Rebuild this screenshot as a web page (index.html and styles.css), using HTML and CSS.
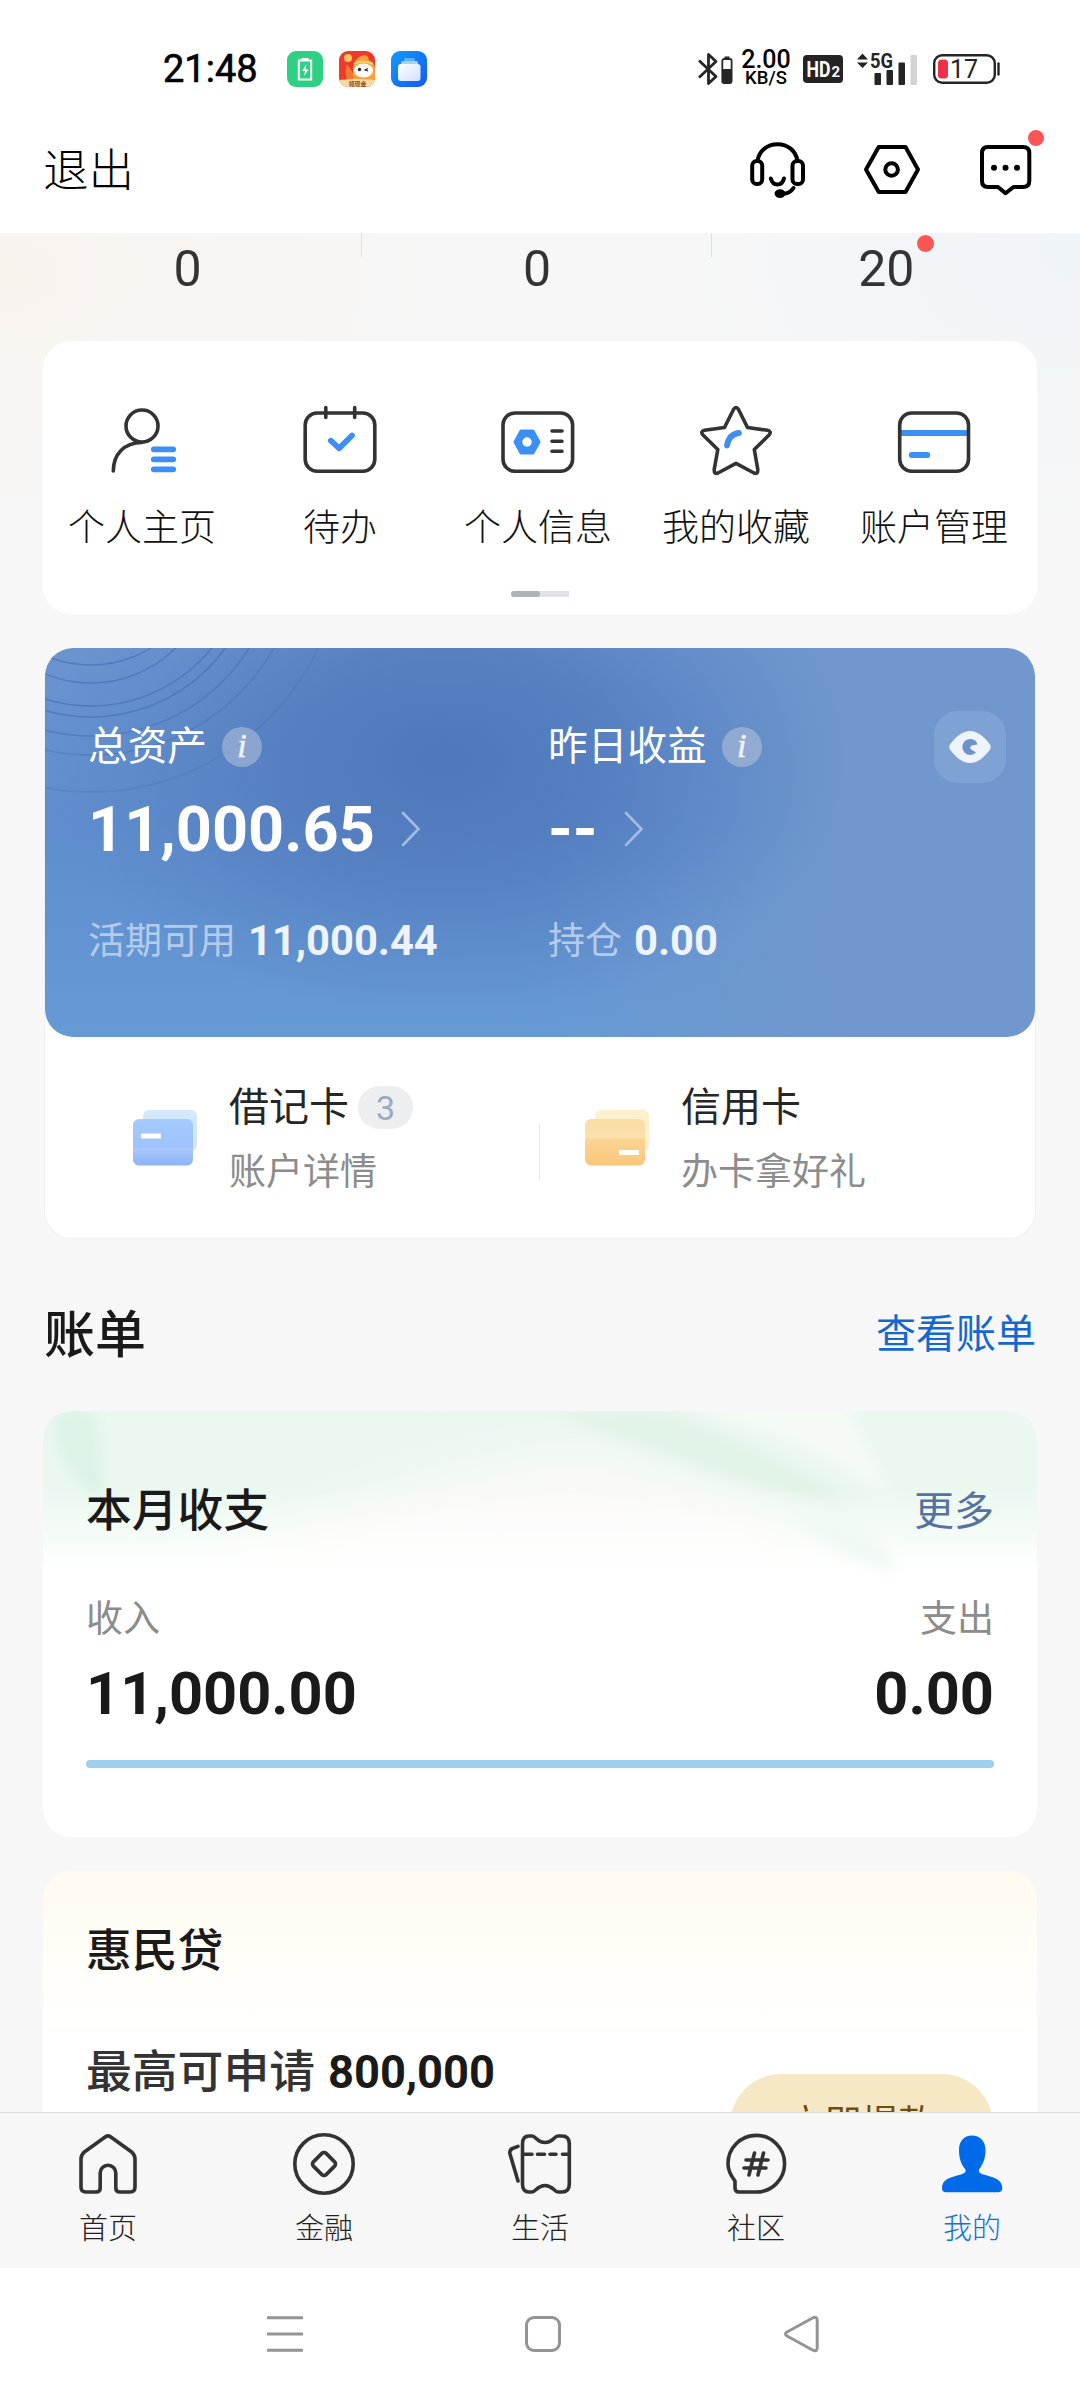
FILE: index.html
```html
<!DOCTYPE html>
<html lang="zh-CN">
<head>
<meta charset="utf-8">
<title>我的</title>
<link rel="stylesheet" href="styles.css">
</head>
<body>
<div class="statusbar">
  <div class="status-left">
    <span class="clock">21:48</span>
    <svg width="36" height="36" viewBox="0 0 36 36"><rect width="36" height="36" rx="9" fill="#2ed083"/><path d="M11.8 9.5H24.2V28.5H11.8Z" fill="none" stroke="#fff" stroke-width="2"/><path d="M14.5 7h7v2.5h-7z" fill="#fff"/><path d="M19.5 13l-4.5 7h3l-.8 5 4.3-6.5h-3z" fill="#fff"/></svg>
    <svg width="36" height="36" viewBox="0 0 36 36"><defs><clipPath id="app"><rect width="36" height="36" rx="9"/></clipPath></defs><g clip-path="url(#app)"><rect width="36" height="36" fill="#ee3a2c"/><path d="M14 36V19C14 9 20 5 26 4c3 1 4 3 3.500 5 3 1 6 4 6.500 8V36Z" fill="#f9a13b"/><path d="M8 13c-2 5-2 11 1 19h5V22Z" fill="#f27a2e"/><path d="M15 13c5-3 13-3 19 0" stroke="#ffd46a" stroke-width="2" fill="none"/><circle cx="9" cy="7" r="4" fill="#fbc45c"/><ellipse cx="24.500" cy="19.500" rx="9.500" ry="7" fill="#fff"/><circle cx="20.500" cy="18.500" r="1.700" fill="#3a2020"/><path d="M29 17.500l-3 1.500 3 1" stroke="#3a2020" stroke-width="1.200" fill="none"/><path d="M0 29Q18 27 36 29V36H0Z" fill="#fbd9a0"/><text x="18.500" y="34.500" class="app-tag" text-anchor="middle">领现金</text></g></svg>
    <svg width="36" height="36" viewBox="0 0 36 36"><defs><linearGradient id="fl" x1="0" y1="0" x2="1" y2="1"><stop offset="0" stop-color="#129cfb"/><stop offset="1" stop-color="#1458f5"/></linearGradient><linearGradient id="fw" x1="0" y1="0" x2="1" y2="1"><stop offset="0" stop-color="#fff"/><stop offset="1" stop-color="#cfe0ff"/></linearGradient></defs><rect width="36" height="36" rx="9" fill="url(#fl)"/><rect x="13" y="7" width="11" height="4" rx="1.500" fill="#5cb3fb"/><rect x="10" y="10" width="17" height="5" rx="1.500" fill="#a5d3fd"/><rect x="7" y="13" width="22.500" height="17" rx="3" fill="url(#fw)"/></svg>
  </div>
  <div class="status-right">
    <svg width="36" height="36" viewBox="0 0 36 36"><path d="M2 9.500L19 25.500 11.500 32.500V3.500L19 10.500 2 26.500" fill="none" stroke="#262626" stroke-width="2.800" stroke-linejoin="round"/><rect x="25.300" y="8" width="9.300" height="24" rx="2" fill="#fff" stroke="#262626" stroke-width="1.800"/><path d="M25 18h10v14h-10z" fill="#262626"/><path d="M27.500 5.500h5v2h-5z" fill="#262626"/></svg>
    <div class="speed"><span class="speed-num">2.00</span><span class="speed-unit">KB/S</span></div>
    <svg class="hd" width="40" height="28" viewBox="0 0 40 28"><rect width="40" height="28" rx="4" fill="#242424"/><text x="3.500" y="22" class="hd-main" textLength="24" lengthAdjust="spacingAndGlyphs">HD</text><text x="28.500" y="22" class="hd-sub">2</text></svg>
    <svg class="signal" width="60" height="34" viewBox="0 0 60 34"><path d="M0 7.500L5.500 1.500 11 7.500ZM0 10.500L5.500 16 11 10.500Z" fill="#242424"/><text x="13" y="16" class="sig-text" textLength="23" lengthAdjust="spacingAndGlyphs">5G</text><g fill="#242424"><rect x="17.500" y="21" width="6.500" height="12" rx="1"/><rect x="29.500" y="18" width="6.500" height="15" rx="1"/><rect x="41.500" y="10.500" width="6.500" height="22.500" rx="1"/></g><rect x="53.500" y="3" width="6.500" height="30" rx="1" fill="#d3d3d3"/></svg>
    <svg class="battery" width="68" height="32" viewBox="0 0 68 32"><rect x="1.200" y="2.200" width="60.600" height="27.600" rx="8" fill="none" stroke="#242424" stroke-width="2.400"/><path d="M65.500 10.500v11" stroke="#242424" stroke-width="2.400" stroke-linecap="round"/><rect x="5" y="6.500" width="10" height="19" rx="3.500" fill="#ee3148"/><text x="31" y="25" text-anchor="middle" class="bat-text">17</text></svg>
  </div>
</div>
<header class="header">
  <span class="logout">退出</span>
  <div class="header-icons">
    <svg class="line-icon" width="60" height="60" viewBox="0 0 60 60"><path d="M9.500 21C11 11 19 4.200 29.500 4.200S48 11 49.500 21"/><rect x="4.200" y="21" width="10" height="23" rx="4.500"/><rect x="44.500" y="21" width="10.500" height="23" rx="4.500"/><path d="M22.800 38.500C25 46.500 34 46.500 36 38.500"/><path d="M45.500 48Q42 53.500 35 53.800"/><ellipse cx="32" cy="53.600" rx="3.500" ry="2.300" fill="#000"/></svg>
    <svg class="line-icon" width="60" height="60" viewBox="0 0 60 60"><path d="M4 29.500L16.700 7H43.500L56 29.500 43.500 52H16.700Z"/><circle cx="29.600" cy="29.500" r="6.300"/></svg>
    <div class="with-dot">
      <svg class="line-icon" width="60" height="60" viewBox="0 0 60 60"><path d="M12 7H47Q53.300 7 53.300 13V41Q53.300 47 47 47H37.500L29.500 53.300 22 47H12Q6 47 6 41V13Q6 7 12 7Z"/><g fill="#000" stroke="none"><circle cx="18" cy="27.800" r="3"/><circle cx="29.500" cy="27.800" r="3"/><circle cx="41" cy="27.800" r="3"/></g></svg>
      <i class="dot dot-msg"></i>
    </div>
  </div>
</header>
<main class="content">
  <section class="stats">
    <div class="stat"><span>0</span></div>
    <div class="stat"><span>0</span></div>
    <div class="stat"><span>20<i class="dot dot-stat"></i></span></div>
  </section>
  <section class="quick card">
    <div class="quick-grid">
      <div class="quick-item"><svg class="q-icon" width="80" height="72" viewBox="0 0 80 72"><circle cx="40" cy="22" r="16"/><path d="M11.300 67C11.500 50 22 38.800 40 38.500"/><path class="blue" d="M51.800 45.300H71.200M51.800 55.300H71.200M51.800 65.300H71.200"/></svg><span>个人主页</span></div>
      <div class="quick-item"><svg class="q-icon" width="80" height="72" viewBox="0 0 80 72"><rect x="5.200" y="9" width="69.600" height="58.300" rx="12"/><path d="M25.800 3.500V13.500M54.700 3.500V13.500"/><path class="blue" d="M30.800 36.700L39.200 44.300 52 31.500"/></svg><span>待办</span></div>
      <div class="quick-item"><svg class="q-icon" width="80" height="72" viewBox="0 0 80 72"><rect x="5" y="9" width="69.600" height="58.300" rx="12"/><path d="M23 27H35L41 38 35 49H23L17 38Z" fill="#3b8ff5" stroke="#3b8ff5" stroke-width="3"/><circle cx="29" cy="38" r="4.700" fill="#fff" stroke="none"/><path d="M54 27H64M54 37.300H64M54 47.300H64"/></svg><span>个人信息</span></div>
      <div class="quick-item"><svg class="q-icon" width="80" height="72" viewBox="0 0 80 72"><path d="M37.500 5.500Q40 1.500 42.500 5.500L51.500 23.500 71.500 26.300Q76 27.500 73 31L58.300 45.500 61.800 65.500Q62 70.500 58 69L40 59.300 22 69Q18 70.500 18.200 65.500L21.800 45.500 7 31Q4 27.500 8.500 26.300L28.500 23.500Z"/><path class="blue" d="M43 29Q33 30 31 41.500"/></svg><span>我的收藏</span></div>
      <div class="quick-item"><svg class="q-icon" width="80" height="72" viewBox="0 0 80 72"><path d="M6 29H74" stroke="#3b8ff5" stroke-width="6" stroke-linecap="butt"/><rect x="5.700" y="9" width="68.800" height="58.300" rx="12"/><path class="blue" d="M17.700 51H33.300"/></svg><span>账户管理</span></div>
    </div>
    <div class="pager"><i></i></div>
  </section>

  <section class="assets">
    <div class="asset-panel">
      <svg class="rings" width="300" height="160" viewBox="0 0 300 160"><g fill="none" stroke="#4068ae" stroke-width="1.400"><g opacity=".55"><circle cx="46" cy="-97" r="114"/><circle cx="46" cy="-85" r="120"/><circle cx="46" cy="-97" r="155"/><circle cx="46" cy="-96" r="165"/></g><circle cx="46" cy="-98" r="186" opacity=".45"/><circle cx="46" cy="-103" r="210" opacity=".35"/><circle cx="46" cy="-107" r="251" opacity=".25"/></g></svg>
      <div class="asset-col">
        <div class="asset-title"><span>总资产</span><i class="info">i</i></div>
        <div class="asset-amount"><b>11,000.65</b><svg width="20" height="36" viewBox="0 0 20 36"><path d="M2 2L17.500 18 2 34"/></svg></div>
        <div class="asset-sub"><span>活期可用</span><b>11,000.44</b></div>
      </div>
      <div class="asset-col">
        <div class="asset-title"><span>昨日收益</span><i class="info">i</i></div>
        <div class="asset-amount"><b>--</b><svg width="20" height="36" viewBox="0 0 20 36"><path d="M2 2L17.500 18 2 34"/></svg></div>
        <div class="asset-sub"><span>持仓</span><b>0.00</b></div>
      </div>
      <div class="eye"><svg width="42" height="32" viewBox="0 0 42 32"><path d="M1 13.500C6 6.500 13 0 21 0S36 6.500 41 13.500Q42.500 16 41 18.500C36 25.500 29 32 21 32S6 25.500 1 18.500Q-.5 16 1 13.500Z" fill="#eef4fe"/><path d="M26.500 9.800A8 8 0 1 0 27 21.500L21.500 18Q20.500 16 22.500 14.500L28.500 13.500Q28 11.500 26.500 9.800Z" fill="#6d91c8"/></svg></div>
    </div>
    <div class="card-row">
      <div class="bank-card">
        <svg width="66" height="58" viewBox="0 0 66 58"><defs><linearGradient id="b1" x1="0" y1="0" x2="0" y2="1"><stop offset="0" stop-color="#a3cbfd"/><stop offset=".58" stop-color="#9fc3fc"/><stop offset=".62" stop-color="#a9c8fc"/><stop offset="1" stop-color="#8db2f8"/></linearGradient></defs><rect x="11" y="1" width="54" height="41" rx="6" fill="#d3e7fd"/><rect x="1" y="10" width="60" height="46.500" rx="6" fill="url(#b1)"/><rect x="9" y="24.500" width="20" height="5" rx="1" fill="#fff"/></svg>
        <div class="bank-text"><div class="bank-name">借记卡<span class="count">3</span></div><div class="bank-desc">账户详情</div></div>
      </div>
      <div class="bank-card">
        <svg width="66" height="58" viewBox="0 0 66 58"><defs><linearGradient id="b2" x1="0" y1="0" x2="0" y2="1"><stop offset="0" stop-color="#fbdda3"/><stop offset=".4" stop-color="#fbe0b0"/><stop offset=".44" stop-color="#fbd493"/><stop offset="1" stop-color="#fac77a"/></linearGradient></defs><rect x="11" y="1" width="54" height="41" rx="6" fill="#fdf0cf"/><rect x="1" y="10" width="60" height="46.500" rx="6" fill="url(#b2)"/><rect x="35" y="41" width="20" height="5" rx="1" fill="#fff"/></svg>
        <div class="bank-text"><div class="bank-name">信用卡</div><div class="bank-desc">办卡拿好礼</div></div>
      </div>
    </div>
  </section>

  <div class="section-head"><h2>账单</h2><a>查看账单</a></div>

  <section class="bill card">
    <svg class="leaf" width="994" height="170" viewBox="0 0 994 170"><defs><filter id="soft" x="-20%" y="-20%" width="140%" height="140%"><feGaussianBlur stdDeviation="7"/></filter><filter id="wide" x="-30%" y="-50%" width="160%" height="200%"><feGaussianBlur stdDeviation="26"/></filter><linearGradient id="fade" x1="0" y1="0" x2="0" y2="1"><stop offset=".45" stop-color="#fff" stop-opacity="0"/><stop offset=".95" stop-color="#fff" stop-opacity="1"/></linearGradient></defs><rect width="994" height="170" fill="#eaf8f0"/><path d="M120 190Q300 70 540 40L720 90 820 190Z" fill="#fbfaf6" filter="url(#wide)"/><path d="M640 0Q760 20 850 90L800 -10Z" fill="#f6faf5" filter="url(#soft)"/><path d="M10 0Q10 60 60 90Q60 40 50 0Z" fill="#dcf3e6" filter="url(#soft)"/><path d="M500 0Q580 30 660 58T820 98Q740 44 620 0Z" fill="#e2f3e7" filter="url(#soft)"/><rect width="994" height="170" fill="url(#fade)"/><path d="M750 104Q800 150 855 162Q840 126 800 112Z" fill="#f0f9f2" filter="url(#soft)"/></svg>
    <div class="bill-head"><h3>本月收支</h3><a>更多</a></div>
    <div class="bill-labels"><span>收入</span><span>支出</span></div>
    <div class="bill-values"><b>11,000.00</b><b>0.00</b></div>
    <div class="bill-bar"></div>
  </section>

  <section class="loan card">
    <h3>惠民贷</h3>
    <div class="loan-row"><div class="loan-text">最高可申请<b>800,000</b></div><span class="loan-btn">立即提款</span></div>
  </section>
</main>
<nav class="tabbar">
  <div class="tab"><svg class="t-icon" width="72" height="72" viewBox="0 0 72 72"><path d="M33.500 8.800Q36 7 38.500 8.800L60 24.300Q63 27 63 31V59Q63 64 58 64H48Q43.800 64 43.800 60V45A7.800 7.800 0 0 0 28.200 45V60Q28.200 64 24 64H14Q9 64 9 59V31Q9 27 12 24.300Z"/></svg><span>首页</span></div>
  <div class="tab"><svg class="t-icon" width="72" height="72" viewBox="0 0 72 72"><circle cx="36" cy="36" r="29.200"/><rect x="27" y="27" width="18" height="18" rx="3" transform="rotate(45 36 36)"/></svg><span>金融</span></div>
  <div class="tab"><svg class="t-icon" width="72" height="72" viewBox="0 0 72 72"><path d="M25 8H28C32 8 33 14.500 41 14.500S50 8 54 8H58Q65.300 8 65.300 16V56Q65.300 64 58 64H54C50 64 49 57.500 41 57.500S32 64 28 64H25Q18.500 64 18.500 56V16Q18.500 8 25 8Z"/><path d="M20 26.200H28M33.500 26.200H40.500M46 26.200H52M58.500 26.200H64"/><path d="M14 18.300L8.500 20.500Q5 22 6 26L14 53"/></svg><span>生活</span></div>
  <div class="tab"><svg class="t-icon" width="72" height="72" viewBox="0 0 72 72"><path d="M36 64H19Q15 64 15 60V53Q8 44 8 36A28.300 28.300 0 1 1 36 64Z"/><path d="M26 32H48M24 40H46M34.500 25L29 47M43.500 25L38 47"/></svg><span>社区</span></div>
  <div class="tab active"><svg width="72" height="72" viewBox="0 0 72 72"><path d="M36 7.500C44 7.500 49.500 13 49.500 22C49.500 31 46.500 37 43 41.500V44C47 49 66 47 66.300 60Q66 64.300 62 64.300H10Q6 64.300 6 60C6.300 47 25 49 29.500 44V41.500C25.500 37 23 31 23 22C23 13 28 7.500 36 7.500Z" fill="#006ae8"/></svg><span>我的</span></div>
</nav>
<div class="sysnav">
  <svg width="36" height="40" viewBox="0 0 36 40"><path d="M1 3.800H35M1 20H35M1 36.300H35"/></svg>
  <svg width="40" height="40" viewBox="0 0 40 40"><rect x="3.500" y="3.500" width="33" height="33" rx="7.500"/></svg>
  <svg width="38" height="40" viewBox="0 0 38 40"><path d="M31 3.800Q35 2 35.200 6.200V34Q35 38 31 36.200L5 22Q2 20 5 18Z"/></svg>
</div>
</body>
</html>
```
FILE: styles.css
```css
* { box-sizing: border-box; margin: 0; padding: 0; }
body {
  width: 1080px; height: 2400px; overflow: hidden;
  display: flex; flex-direction: column;
  background: #fff; color: #1a1a1a;
  font-family: Roboto, "Noto Sans CJK SC", sans-serif;
  font-weight: 400; line-height: 1;
}
svg { display: block; flex: none; }
i { font-style: normal; }
h2, h3 { font-weight: 500; }

.statusbar {
  height: 106px; padding: 32px 79px 0 163px;
  display: flex; justify-content: space-between; align-items: center;
}
.status-left { display: flex; align-items: center; gap: 16px; }
.clock { width: 108px; font-size: 38px; color: #000; -webkit-text-stroke: .6px #000; }
.app-tag { font-size: 6px; font-weight: 700; fill: #9c4a14; }
.status-right { display: flex; align-items: center; }
.speed { width: 50px; margin-left: 8px; display: flex; flex-direction: column; align-items: center; }
.speed-num { font-size: 25px; line-height: 25px; margin-top: -3px; font-weight: 500; color: #000; }
.speed-unit { font-size: 18.5px; line-height: 19px; margin-top: -3px; font-weight: 500; color: #000; }
.hd { margin-left: 12px; }
.hd-main { font-size: 22px; font-weight: 700; fill: #fff; }
.hd-sub { font-size: 15px; font-weight: 700; fill: #fff; }
.signal { margin-left: 14px; overflow: visible; }
.sig-text { font-size: 21px; font-weight: 700; fill: #242424; }
.battery { margin-left: 16px; }
.bat-text { font-size: 25px; fill: #242424; }

.header {
  height: 127px; padding: 0 44px 0 43px;
  display: flex; justify-content: space-between; align-items: center;
}
.logout { margin-top: 5px; font-size: 45.5px; font-weight: 300; color: #000; }
.header-icons { display: flex; gap: 54px; }
.line-icon { fill: none; stroke: #000; stroke-width: 4; stroke-linejoin: round; stroke-linecap: round; }
.with-dot { position: relative; }
.dot { width: 16px; height: 16px; border-radius: 50%; background: #fb5555; }
.dot-msg { position: absolute; left: 52px; top: -10px; }

.content {
  height: 1879px; overflow: hidden; flex: none;
  background:
    radial-gradient(ellipse 420px 260px at 0 40px, #f9f3ee, rgba(247,247,247,0)),
    radial-gradient(ellipse 380px 260px at 1080px 20px, #eff4f9, rgba(247,247,247,0)),
    #f7f7f7;
}
.stats { height: 108px; padding: 0 19px 0 13px; display: grid; grid-template-columns: repeat(3, 1fr); }
.stat {
  display: flex; justify-content: center; padding-top: 11px;
  font-size: 50px; color: #333;
  background: linear-gradient(#dedede, #dedede) right top / 1px 24px no-repeat;
}
.stat:last-child { background: none; }
.stat span { position: relative; height: 50px; }
.dot-stat { position: absolute; left: 58px; top: -10px; width: 19px; height: 19px; border: 1px solid #fff; }

.card { margin: 0 43px; border-radius: 28px; background: #fff; }
.quick { height: 273px; padding-top: 63px; }
.quick-grid { display: grid; grid-template-columns: repeat(5, 198px); }
.quick-item { display: flex; flex-direction: column; align-items: center; gap: 34px; font-size: 37px; font-weight: 300; color: #111; }
.q-icon { fill: none; stroke: #333; stroke-width: 3.6; stroke-linecap: round; stroke-linejoin: round; }
.q-icon .blue { stroke: #3b8ff5; stroke-width: 5.8; }
.pager { width: 58px; height: 6px; margin: 44px auto 0; background: #dfe2e6; border-radius: 3px 0 0 3px; }
.pager i { display: block; width: 50%; height: 6px; background: #adb2b7; border-radius: 3px; }

.assets {
  margin: 34px 44px 0; height: 591px; border: 1px solid #f0f0f0; border-top: 0;
  border-radius: 28px; background: #fff; overflow: hidden;
}
.asset-panel {
  position: relative; height: 389px; border-radius: 28px; overflow: hidden;
  padding: 79px 29px 0 43px; display: flex;
  background:
    radial-gradient(ellipse 400px 260px at 400px 110px, rgba(78,119,186,.95) 0%, rgba(80,121,188,.72) 40%, rgba(82,124,190,.25) 78%, rgba(82,122,187,0) 100%),
    linear-gradient(96deg, rgba(112,153,207,0) 50%, #7098ce 80%),
    linear-gradient(180deg, #6b94cf 0%, #5f8dcd 45%, #669ad5 100%);
}
.rings { position: absolute; left: 0; top: 0; }
.asset-col { position: relative; width: 460px; flex: none; color: #fff; }
.asset-title { display: flex; align-items: center; height: 40px; gap: 15px; font-size: 39.7px; }
.info {
  width: 40px; height: 40px; border-radius: 50%; background: rgba(190,200,220,.5);
  font: italic 34px/37px "Liberation Serif", serif; -webkit-text-stroke: .6px #edf2fb; text-align: center; color: #edf2fb;
}
.asset-amount { height: 66px; margin-top: 29px; display: flex; align-items: center; gap: 26px; font-size: 63px; }
.asset-amount svg { fill: none; stroke: #a3bce3; stroke-width: 2.6; stroke-linecap: round; }
.asset-sub { height: 44px; margin-top: 57px; display: flex; align-items: center; gap: 12px; font-size: 37px; color: #b5cbec; }
.asset-sub b { font-size: 41.7px; color: #eef4fe; }
.eye {
  position: absolute; left: 889px; top: 63px; width: 72px; height: 72px; border-radius: 24px;
  background: rgba(255,255,255,.1); display: flex; align-items: center; justify-content: center;
}
.card-row {
  height: 201px; padding: 49px 0 0 87px; display: grid; grid-template-columns: 452px 1fr;
  background: linear-gradient(#e6e6e6, #e6e6e6) 494px 86px / 1px 58px no-repeat;
}
.bank-card { display: flex; gap: 31px; }
.bank-card svg { margin-top: 23px; }
.bank-name { height: 43px; display: flex; align-items: center; font-size: 40px; color: #262626; }
.count {
  width: 55px; height: 43px; margin-left: 9px; border-radius: 22px; background: #eceef0;
  font-size: 34px; line-height: 44px; text-align: center; color: #9ba9c0;
}
.bank-desc { margin-top: 25px; font-size: 37px; color: #8c8c8c; }

.section-head {
  height: 172px; padding: 20px 44px 0; display: flex; align-items: center; justify-content: space-between;
}
.section-head h2 { font-size: 51px; font-weight: 500; }
.section-head a { font-size: 40px; color: #1368d0; }

.bill { position: relative; height: 426px; overflow: hidden; padding: 78px 43px 0; }
.leaf { position: absolute; left: 0; top: 0; }
.bill-head { position: relative; height: 46px; display: flex; align-items: center; justify-content: space-between; }
.bill-head h3, .loan h3 { font-size: 45.8px; }
.bill-head a { font-size: 40px; color: #56729e; }
.bill-labels { height: 38px; margin-top: 66px; display: flex; justify-content: space-between; font-size: 37px; color: #8c8c8c; }
.bill-values { height: 60px; margin-top: 26px; display: flex; justify-content: space-between; font-size: 59.5px; }
.bill-bar { height: 8px; margin-top: 35px; border-radius: 4px; background: #9fcfed; }

.loan {
  height: 320px; margin-top: 34px; padding: 58px 44px 0 43px;
  background: linear-gradient(#fffaf0, #fffdf6 70px, #fff 160px);
}
.loan-row { display: flex; justify-content: space-between; align-items: flex-start; margin-top: 75px; }
.loan-text { font-size: 45.8px; font-weight: 500; color: #333; }
.loan-text b { margin-left: 13px; font-size: 45.3px; color: #1a1a1a; }
.loan-btn {
  width: 263px; height: 102px; margin-top: 24px; border-radius: 51px; background: #f6e8c5;
  font-size: 37px; line-height: 102px; text-align: center; color: #6e4d0f;
}

.tabbar {
  height: 156px; flex: none; border-top: 1px solid #dcdcdc; background: #f7f7f7;
  display: grid; grid-template-columns: repeat(5, 216px);
}
.tab { display: flex; flex-direction: column; align-items: center; padding-top: 15px; gap: 15px; font-size: 29px; font-weight: 300; color: #222; }
.tab.active { color: #1070dc; }
.t-icon { fill: none; stroke: #333; stroke-width: 3.6; stroke-linecap: round; stroke-linejoin: round; }

.sysnav { height: 132px; padding: 46px 260px 0 267px; display: flex; justify-content: space-between; }
.sysnav svg { fill: none; stroke: #949494; stroke-width: 3; stroke-linejoin: round; stroke-linecap: round; }
```
